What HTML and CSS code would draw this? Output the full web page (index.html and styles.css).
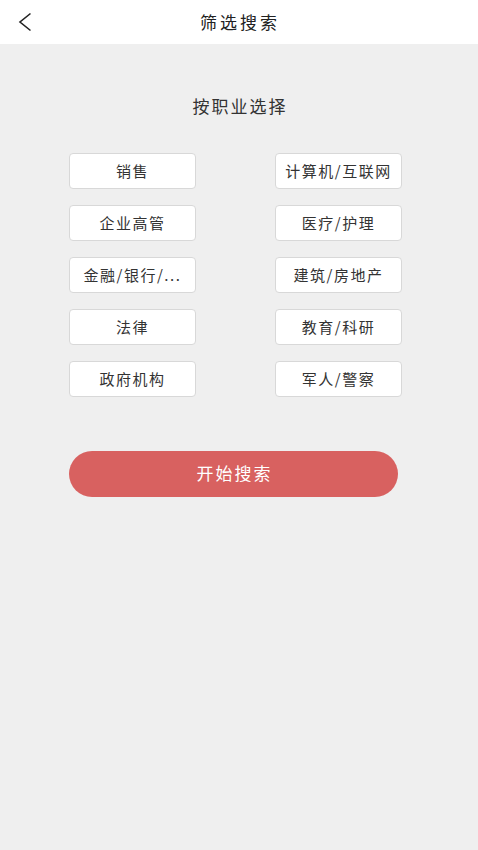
FILE: index.html
```html
<html>

<head>
    <meta charset="UTF-8">
    <meta name="viewport" content="width=device-width, initial-scale=1.0">
    <title>筛选搜索</title>
    <link rel="stylesheet" href="styles.css">
</head>

<body>
    <div class="header">
        <span class="back">
            <svg width="14" height="20" viewBox="0 0 14 20">
                <path d="M12.5 1.5 L2 10 L12.5 18.5" fill="none" stroke="#222" stroke-width="1.6" />
            </svg>
        </span>
        <h1>筛选搜索</h1>
    </div>

    <div class="content">
        <h2>按职业选择</h2>
        <div class="job-grid">
            <div class="job">销售</div>
            <div class="job">计算机/互联网</div>
            <div class="job">企业高管</div>
            <div class="job">医疗/护理</div>
            <div class="job">金融/银行/...</div>
            <div class="job">建筑/房地产</div>
            <div class="job">法律</div>
            <div class="job">教育/科研</div>
            <div class="job">政府机构</div>
            <div class="job">军人/警察</div>
        </div>
        <button class="search-btn">开始搜索</button>
    </div>
</body>

</html>
```

FILE: styles.css
```css
body {
    margin: 0;
    font-family: "Noto Sans CJK SC", "Liberation Sans", sans-serif;
    background-color: #efefef;
    height: 850px;
    color: #333;
}

.header {
    height: 44px;
    background-color: #fff;
    display: flex;
    align-items: center;
    justify-content: center;
    position: relative;
}

.back {
    position: absolute;
    left: 18px;
    top: 12px;
}

.header h1 {
    margin: 0 0 2px 2px;
    font-size: 17px;
    font-weight: normal;
    letter-spacing: 3px;
    color: #222;
}

.content {
    padding-top: 49px;
    display: flex;
    flex-direction: column;
}

.content h2 {
    margin: 0 0 34px 0;
    font-size: 17px;
    font-weight: normal;
    line-height: 26px;
    letter-spacing: 2px;
    text-align: center;
    padding-left: 2px;
    color: #333;
}

.job-grid {
    display: grid;
    grid-template-columns: 127px 127px;
    column-gap: 79px;
    row-gap: 16px;
    margin-left: 69px;
}

.job {
    height: 34px;
    line-height: 34px;
    background-color: #fff;
    border: 1px solid #d8d8d8;
    border-radius: 4px;
    text-align: center;
    font-size: 15px;
    letter-spacing: 1.5px;
    color: #333;
    white-space: nowrap;
}

.search-btn {
    margin: 54px 0 0 69px;
    padding: 0 0 3px 2px;
    width: 329px;
    height: 46px;
    border: none;
    border-radius: 23px;
    background-color: #d86160;
    color: #fff;
    font-family: "Noto Sans CJK SC", sans-serif;
    font-size: 17px;
    letter-spacing: 2px;
}
```
